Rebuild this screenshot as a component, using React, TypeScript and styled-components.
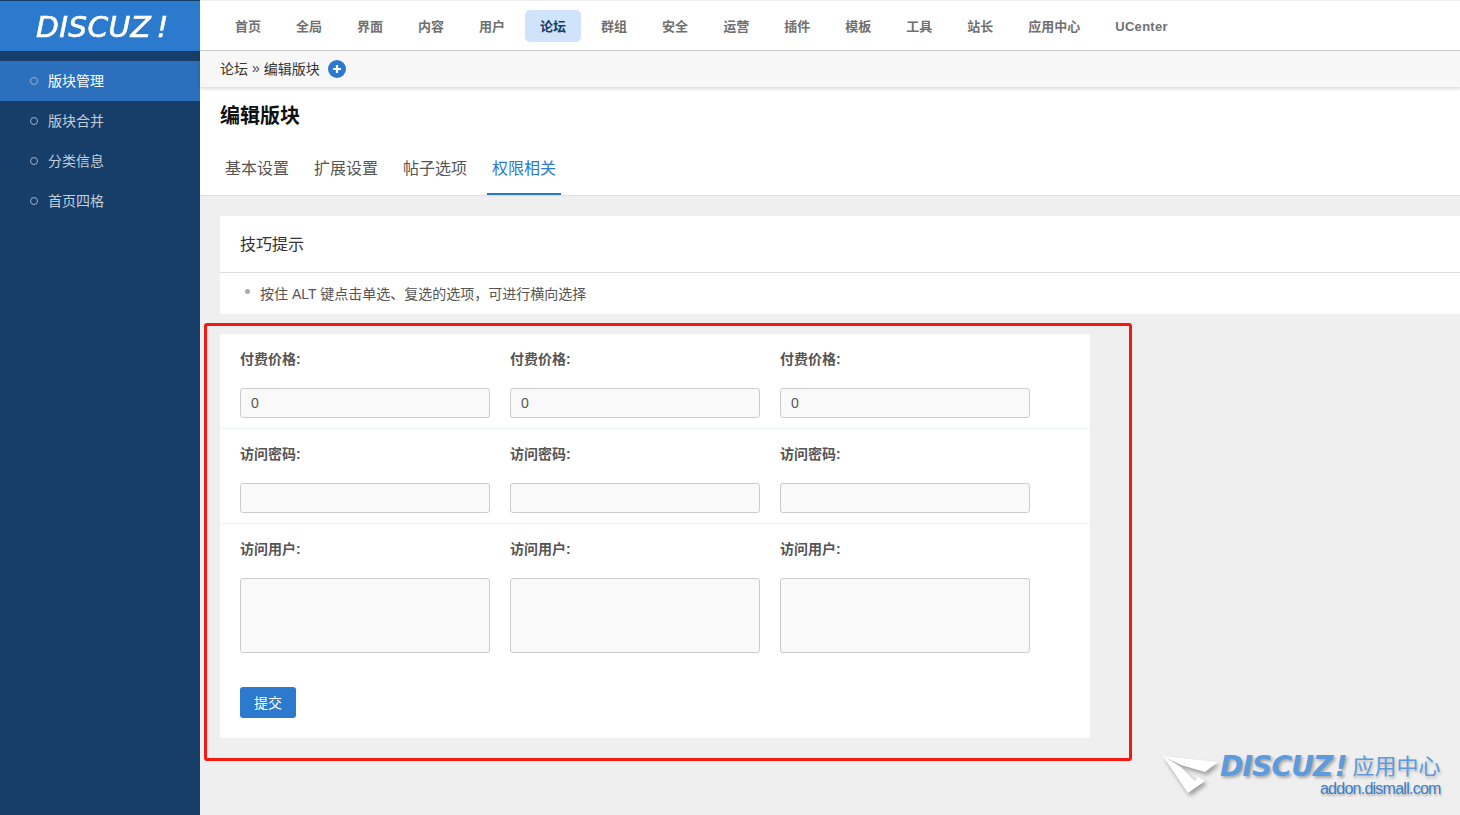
import React from "react";
import styled, { createGlobalStyle } from "styled-components";

const Global = createGlobalStyle`
  html, body {
    margin: 0;
    padding: 0;
    height: 815px;
    overflow: hidden;
    background: #efefef;
    font-family: "Liberation Sans", "Noto Sans CJK SC", sans-serif;
  }
  * { box-sizing: border-box; }
`;

const navItems = ["首页", "全局", "界面", "内容", "用户", "论坛", "群组", "安全", "运营", "插件", "模板", "工具", "站长", "应用中心", "UCenter"];
const sideItems = ["版块管理", "版块合并", "分类信息", "首页四格"];
const tabs = ["基本设置", "扩展设置", "帖子选项", "权限相关"];

export default function App() {
  return (
    <Page>
      <Global />
      <Sidebar>
        <LogoBox>
          <LogoText>DISCUZ<LogoMark>!</LogoMark></LogoText>
        </LogoBox>
        <SideList>
          {sideItems.map((item, i) => (
            <SideItem key={item} $active={i === 0}>
              <SideDot />
              {item}
            </SideItem>
          ))}
        </SideList>
      </Sidebar>
      <Main>
        <TopNav>
          {navItems.map((item) => (
            <NavItem key={item} $active={item === "论坛"} $latin={item === "UCenter"}>{item}</NavItem>
          ))}
        </TopNav>
        <Crumbs>
          论坛 <CrumbSep>»</CrumbSep> 编辑版块
          <PlusIcon viewBox="0 0 18 18">
            <circle cx="9" cy="9" r="9" fill="#2b7acd" />
            <path d="M9 5v8M5 9h8" stroke="#fff" strokeWidth="2.2" />
          </PlusIcon>
        </Crumbs>
        <Header>
          <Title>编辑版块</Title>
          <Tabs>
            {tabs.map((tab, i) => (
              <Tab key={tab} $active={i === 3}>{tab}</Tab>
            ))}
          </Tabs>
        </Header>
        <Content>
          <TipCard>
            <TipTitle>技巧提示</TipTitle>
            <TipBody>
              <TipDot />
              按住 ALT 键点击单选、复选的选项，可进行横向选择
            </TipBody>
          </TipCard>
          <FormOutline>
            <FormCard>
              <FormRow>
                {[0, 1, 2].map((i) => (
                  <Field key={i}>
                    <FieldLabel>付费价格:</FieldLabel>
                    <TextInput defaultValue="0" />
                  </Field>
                ))}
              </FormRow>
              <FormRow>
                {[0, 1, 2].map((i) => (
                  <Field key={i}>
                    <FieldLabel>访问密码:</FieldLabel>
                    <TextInput />
                  </Field>
                ))}
              </FormRow>
              <FormRow $last>
                {[0, 1, 2].map((i) => (
                  <Field key={i}>
                    <FieldLabel>访问用户:</FieldLabel>
                    <TextArea />
                  </Field>
                ))}
              </FormRow>
              <SubmitButton>提交</SubmitButton>
            </FormCard>
          </FormOutline>
        </Content>
      </Main>
      <Watermark>
        <PlaneIcon viewBox="0 0 58 44">
          <path d="M1 1 L56 7 L43 17 L19 10 Z" fill="#ffffff" />
          <path d="M1 1 L19 12 L33 26 L36 22 L43 26 L26 38 Z" fill="#ffffff" />
        </PlaneIcon>
        <WatermarkText>
          <WatermarkTop>
            <WatermarkBrand>DISCUZ<WatermarkMark>!</WatermarkMark></WatermarkBrand>
            <WatermarkCn>应用中心</WatermarkCn>
          </WatermarkTop>
          <WatermarkUrl>addon.dismall.com</WatermarkUrl>
        </WatermarkText>
      </Watermark>
    </Page>
  );
}

const Page = styled.div`
  position: relative;
  display: flex;
  width: 1460px;
  height: 815px;
  overflow: hidden;
  background: #efefef;
`;

const Sidebar = styled.aside`
  flex: 0 0 200px;
  background: #173d69;
`;

const LogoBox = styled.div`
  height: 50px;
  margin-top: 1px;
  padding: 3px 0 0 36px;
  display: flex;
  align-items: center;
  background: #2b7acd;
`;

const LogoText = styled.div`
  color: #fff;
  font: italic 400 28px/1 "DejaVu Sans", sans-serif;
  letter-spacing: 0.3px;
  white-space: nowrap;
  -webkit-text-stroke: 0.6px #fff;
  transform: scaleX(1.06);
  transform-origin: left center;
`;

const LogoMark = styled.span`
  margin-left: 5px;
`;

const SideList = styled.nav`
  padding-top: 10px;
`;

const SideItem = styled.div<{ $active?: boolean }>`
  height: 40px;
  display: flex;
  align-items: center;
  padding: 0 0 2px 30px;
  font-size: 14px;
  color: ${(p) => (p.$active ? "#ffffff" : "#c4ced9")};
  background: ${(p) => (p.$active ? "#2b6fbd" : "transparent")};
`;

const SideDot = styled.span`
  width: 8px;
  height: 8px;
  margin: 2px 10px 0 0;
  border: 1px solid #9fb0c4;
  border-radius: 50%;
`;

const Main = styled.div`
  flex: 1;
  min-width: 0;
  display: flex;
  flex-direction: column;
`;

const TopNav = styled.div`
  height: 51px;
  display: flex;
  align-items: flex-start;
  padding: 9px 0 0 20px;
  gap: 5px;
  background: #fff;
  border-top: 1px solid #eeeeee;
  border-bottom: 1px solid #cccccc;
`;

const NavItem = styled.div<{ $active?: boolean; $latin?: boolean }>`
  height: 32px;
  line-height: 33px;
  padding: 0 15px;
  font-size: 13px;
  font-weight: 700;
  letter-spacing: ${(p) => (p.$latin ? "0.3px" : "0")};
  border-radius: 5px;
  color: ${(p) => (p.$active ? "#173d69" : "#707070")};
  background: ${(p) => (p.$active ? "#cfe4fa" : "transparent")};
`;

const Crumbs = styled.div`
  position: relative;
  height: 36px;
  display: flex;
  align-items: center;
  gap: 4px;
  padding: 0 0 2px 20px;
  font-size: 14px;
  color: #333;
  background: #f7f7f7;
  box-shadow: 0 2px 3px rgba(0, 0, 0, 0.14);
`;

const CrumbSep = styled.span`
  color: #444;
`;

const PlusIcon = styled.svg`
  width: 18px;
  height: 18px;
  margin: 2px 0 0 4px;
`;

const Header = styled.div`
  height: 109px;
  padding: 17px 0 0 20px;
  background: #fff;
  border-bottom: 1px solid #dddddd;
`;

const Title = styled.h1`
  margin: 0;
  font-size: 20px;
  line-height: 24px;
  font-weight: 700;
  color: #111;
`;

const Tabs = styled.div`
  display: flex;
  gap: 15px;
  margin-top: 21px;
`;

const Tab = styled.div<{ $active?: boolean }>`
  height: 46px;
  line-height: 40px;
  padding: 0 5px;
  font-size: 16px;
  color: ${(p) => (p.$active ? "#2b7acd" : "#555555")};
  border-bottom: 2px solid ${(p) => (p.$active ? "#2b7acd" : "transparent")};
`;

const Content = styled.div`
  padding: 20px 0 0 20px;
`;

const TipCard = styled.section`
  background: #fff;
`;

const TipTitle = styled.div`
  height: 57px;
  line-height: 58px;
  padding-left: 20px;
  font-size: 16px;
  color: #333;
  border-bottom: 1px solid #dddddd;
`;

const TipBody = styled.div`
  height: 41px;
  display: flex;
  align-items: center;
  padding: 0 0 2px 25px;
  font-size: 14px;
  color: #555;
`;

const TipDot = styled.span`
  width: 5px;
  height: 5px;
  margin: -2px 10px 0 0;
  border-radius: 50%;
  background: #aaaaaa;
`;

const FormOutline = styled.div`
  position: relative;
  width: 928px;
  height: 438px;
  margin: 9px 0 0 -16px;
  padding: 8px 0 0 13px;
  border: 3px solid #f5190f;
  border-radius: 3px;
`;

const FormCard = styled.section`
  width: 870px;
  height: 404px;
  background: #fff;
`;

const FormRow = styled.div<{ $last?: boolean }>`
  display: flex;
  gap: 20px;
  padding: 0 0 ${(p) => (p.$last ? "34px" : "10px")} 20px;
  border-bottom: ${(p) => (p.$last ? "none" : "1px solid #eef3f7")};
`;

const Field = styled.div`
  width: 250px;
`;

const FieldLabel = styled.div`
  height: 54px;
  line-height: 50px;
  font-size: 14px;
  font-weight: 700;
  color: #555;
`;

const TextInput = styled.input`
  display: block;
  width: 250px;
  height: 30px;
  padding: 0 10px;
  font: 14px "Liberation Sans", sans-serif;
  color: #555;
  background: #f9f9f9;
  border: 1px solid #cccccc;
  border-radius: 3px;
  outline: none;
`;

const TextArea = styled.textarea`
  display: block;
  width: 250px;
  height: 75px;
  resize: none;
  background: #f9f9f9;
  border: 1px solid #cccccc;
  border-radius: 3px;
  outline: none;
`;

const SubmitButton = styled.button`
  display: block;
  width: 56px;
  height: 31px;
  margin-left: 20px;
  padding: 0 0 2px;
  font: 14px "Liberation Sans", "Noto Sans CJK SC", sans-serif;
  color: #fff;
  background: #2b7acd;
  border: none;
  border-radius: 3px;
`;

const Watermark = styled.div`
  position: absolute;
  left: 1162px;
  top: 752px;
  display: flex;
  align-items: flex-start;
`;

const PlaneIcon = styled.svg`
  width: 58px;
  height: 44px;
  margin-top: 3px;
  overflow: visible;
  filter: drop-shadow(2px 3px 2px rgba(0, 0, 0, 0.35));
`;

const WatermarkText = styled.div``;

const WatermarkTop = styled.div`
  display: flex;
  align-items: center;
  white-space: nowrap;
`;

const WatermarkBrand = styled.span`
  font: italic 700 28px/30px "DejaVu Sans", sans-serif;
  letter-spacing: -0.8px;
  color: #5d9bdc;
  text-shadow: 2px 2px 3px rgba(0, 0, 0, 0.3);
`;

const WatermarkMark = styled.span`
  margin-left: 2px;
`;

const WatermarkCn = styled.span`
  margin-left: 6px;
  font-size: 22px;
  line-height: 30px;
  color: #5d9bdc;
  text-shadow: 1px 2px 3px rgba(0, 0, 0, 0.25);
`;

const WatermarkUrl = styled.div`
  margin-top: -2px;
  text-align: right;
  font-size: 16px;
  letter-spacing: -0.75px;
  line-height: 18px;
  color: #3c7ec4;
  text-shadow: 1px 2px 2px rgba(0, 0, 0, 0.25);
`;
